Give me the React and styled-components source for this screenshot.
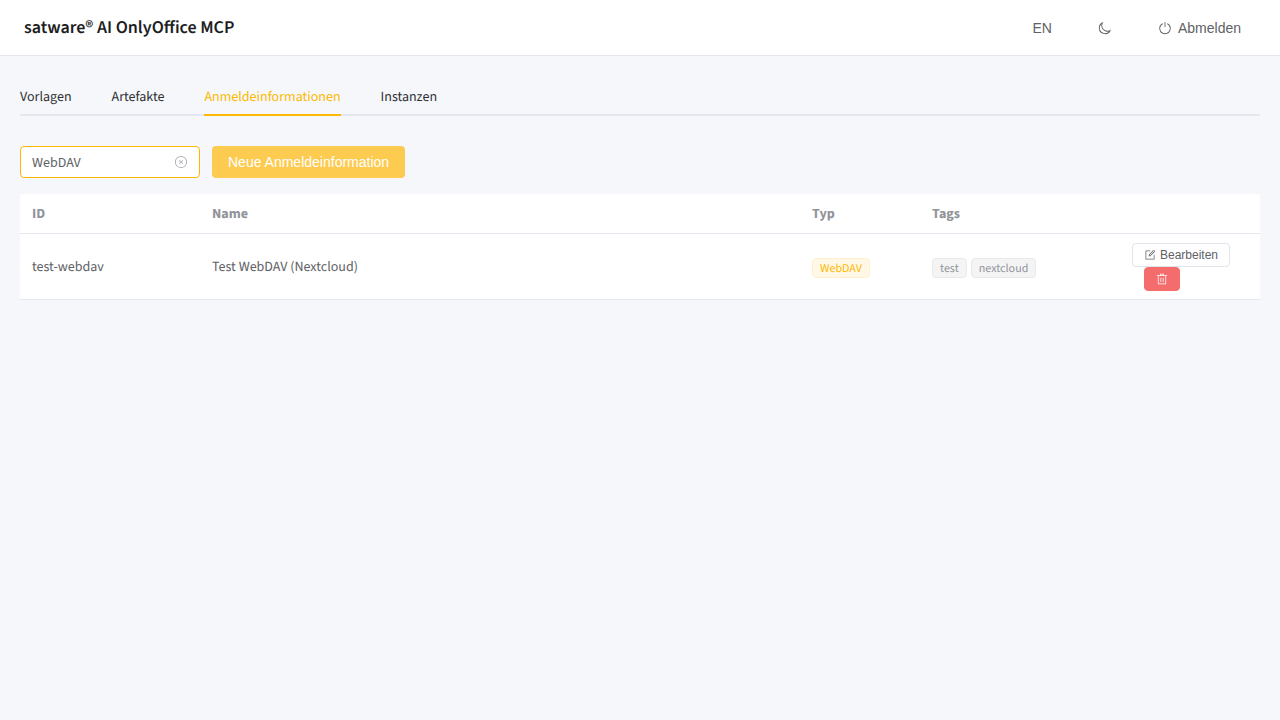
import React, { useState } from "react";
import styled, { createGlobalStyle, css } from "styled-components";

const GlobalStyle = createGlobalStyle`
  *, *::before, *::after { box-sizing: border-box; }
  body {
    margin: 0;
    background: #f5f7fb;
    color: #606266;
    font-family: "Source Sans 3", "Noto Sans CJK SC", "Noto Sans", sans-serif;
    font-size: 14px;
    text-rendering: geometricPrecision;
  }
`;

const uiFont = css`
  font-family: "Liberation Sans", Arial, sans-serif;
  text-rendering: auto;
`;

const Svg = styled.svg`
  display: block;
  flex: none;
  width: ${(p) => p.$size}px;
  height: ${(p) => p.$size}px;
  fill: currentColor;
`;

const icons = {
  moon: [
    "M240.448 240.448a384 384 0 1 0 559.424 525.696 448 448 0 0 1-542.016-542.08 391 391 0 0 0-17.408 16.384m181.056 362.048a384 384 0 0 0 525.632 16.384A448 448 0 1 1 405.056 76.8a384 384 0 0 0 16.448 525.696",
  ],
  power: [
    "M352 159.872V230.4a352 352 0 1 0 320 0v-70.528A416.128 416.128 0 0 1 512 960a416 416 0 0 1-160-800.128z",
    "M512 64q32 0 32 32v320q0 32-32 32t-32-32V96q0-32 32-32",
  ],
  clear: [
    "m466.752 512-90.496-90.496a32 32 0 0 1 45.248-45.248L512 466.752l90.496-90.496a32 32 0 0 1 45.248 45.248L557.248 512l90.496 90.496a32 32 0 1 1-45.248 45.248L512 557.248l-90.496 90.496a32 32 0 0 1-45.248-45.248z",
    "M512 896a384 384 0 1 0 0-768 384 384 0 0 0 0 768m0 64a448 448 0 1 1 0-896 448 448 0 0 1 0 896",
  ],
  edit: [
    "M832 512a32 32 0 1 1 64 0v352a32 32 0 0 1-32 32H160a32 32 0 0 1-32-32V160a32 32 0 0 1 32-32h352a32 32 0 0 1 0 64H192v640h640z",
    "m469.952 554.24 52.8-7.552L847.104 222.4a32 32 0 1 0-45.248-45.248L477.44 501.44l-7.552 52.8zm422.4-422.4a96 96 0 0 1 0 135.808l-331.84 331.84a32 32 0 0 1-18.112 9.088L436.8 623.68a32 32 0 0 1-36.224-36.224l15.104-105.6a32 32 0 0 1 9.024-18.112l331.904-331.84a96 96 0 0 1 135.744 0z",
  ],
  trash: [
    "M160 256H96a32 32 0 0 1 0-64h256V95.936a32 32 0 0 1 32-32h256a32 32 0 0 1 32 32V192h256a32 32 0 1 1 0 64h-64v672a32 32 0 0 1-32 32H192a32 32 0 0 1-32-32zm448-64v-64H416v64zM224 896h576V256H224zm192-128a32 32 0 0 1-32-32V416a32 32 0 0 1 64 0v320a32 32 0 0 1-32 32m192 0a32 32 0 0 1-32-32V416a32 32 0 0 1 64 0v320a32 32 0 0 1-32 32",
  ],
};

const Icon = ({ name, size = 14 }) => (
  <Svg viewBox="0 0 1024 1024" $size={size} aria-hidden="true">
    {icons[name].map((d) => (
      <path key={d} d={d} />
    ))}
  </Svg>
);

const Header = styled.header`
  display: flex;
  align-items: center;
  justify-content: space-between;
  height: 56px;
  padding: 0 24px;
  background: #fff;
  border-bottom: 1px solid #e4e7ed;
`;

const Title = styled.h1`
  margin: 0;
  padding-top: 2px;
  color: #1d1e1f;
  font-size: 18px;
  font-weight: 600;
  line-height: 24px;
`;

const HeaderActions = styled.div`
  display: flex;
  gap: 16px;
`;

const TextButton = styled.button`
  ${uiFont}
  display: inline-flex;
  align-items: center;
  gap: 6px;
  height: 32px;
  padding: 0 15px;
  border: 0;
  background: transparent;
  color: #606266;
  font-size: 14px;
  cursor: pointer;
`;

const Main = styled.main`
  padding: 20px;
`;

const Tabs = styled.nav`
  display: flex;
  gap: 40px;
  height: 40px;
  margin-bottom: 30px;
  box-shadow: inset 0 -2px 0 #e4e7ed;
`;

const Tab = styled.a`
  color: ${(p) => (p.$active ? "#fcb900" : "#303133")};
  line-height: 42px;
  text-decoration: none;
  box-shadow: ${(p) => (p.$active ? "inset 0 -2px 0 #fcb900" : "none")};
`;

const Toolbar = styled.div`
  display: flex;
  gap: 12px;
  margin-bottom: 16px;
`;

const Filter = styled.div`
  display: flex;
  align-items: center;
  width: 180px;
  height: 32px;
  padding: 0 11px;
  border: 1px solid #fcb900;
  border-radius: 4px;
  background: #fff;
`;

const FilterSelect = styled.select`
  flex: 1;
  min-width: 0;
  padding: 2px 0 0;
  border: 0;
  outline: 0;
  appearance: none;
  background: transparent;
  color: #606266;
  font: inherit;
  line-height: 24px;
`;

const ClearButton = styled.button`
  padding: 0;
  border: 0;
  background: transparent;
  color: #a8abb2;
  cursor: pointer;
`;

const PrimaryButton = styled.button`
  ${uiFont}
  height: 32px;
  padding: 0 16px;
  border: 0;
  border-radius: 4px;
  background: #fdcb50;
  color: #fff;
  font-size: 14px;
  cursor: pointer;
`;

const Table = styled.table`
  width: 100%;
  table-layout: fixed;
  border-spacing: 0;
  background: #fff;
`;

const Col = styled.col`
  width: ${(p) => (p.$width ? `${p.$width}px` : "auto")};
`;

const HeadCell = styled.th`
  height: 40px;
  padding: 2px 12px 0;
  border-bottom: 1px solid #e4e7ed;
  color: #909399;
  font-weight: 700;
  line-height: 23px;
  text-align: left;
`;

const Cell = styled.td`
  height: 66px;
  padding: ${(p) => (p.$text ? "10px 12px 8px" : "8px 12px")};
  border-bottom: 1px solid #e4e7ed;
  line-height: 23px;
`;

const TagList = styled.div`
  display: flex;
  gap: 4px;
  padding-top: 3px;
`;

const Tag = styled.span`
  height: 20px;
  padding: 0 7px;
  border: 1px solid ${(p) => (p.$info ? "#e9e9eb" : "#fff1cc")};
  border-radius: 4px;
  background: ${(p) => (p.$info ? "#f4f4f5" : "#fff8e6")};
  color: ${(p) => (p.$info ? "#909399" : "#fcb900")};
  font-size: 12px;
  line-height: 20px;
`;

const RowActions = styled.div`
  display: flex;
  flex-direction: column;
  align-items: flex-start;
`;

const SmallButton = styled.button`
  ${uiFont}
  display: inline-flex;
  align-items: center;
  gap: 4px;
  height: 24px;
  padding: 0 11px;
  border: 1px solid ${(p) => (p.$danger ? "#f56c6c" : "#e2e4ec")};
  border-radius: 4px;
  background: ${(p) => (p.$danger ? "#f56c6c" : "#fff")};
  color: ${(p) => (p.$danger ? "#fff" : "#606266")};
  margin-left: ${(p) => (p.$danger ? "12px" : "0")};
  font-size: 12px;
  white-space: nowrap;
  cursor: pointer;
`;

const tabs = ["Vorlagen", "Artefakte", "Anmeldeinformationen", "Instanzen"];
const rows = [
  {
    id: "test-webdav",
    name: "Test WebDAV (Nextcloud)",
    type: "WebDAV",
    tags: ["test", "nextcloud"],
  },
];

export default function App() {
  const [type, setType] = useState("WebDAV");
  const [active, setActive] = useState("Anmeldeinformationen");

  return (
    <>
      <GlobalStyle />
      <Header>
        <Title>satware® AI OnlyOffice MCP</Title>
        <HeaderActions>
          <TextButton type="button">EN</TextButton>
          <TextButton type="button" aria-label="Dunkles Design">
            <Icon name="moon" />
          </TextButton>
          <TextButton type="button">
            <Icon name="power" />
            Abmelden
          </TextButton>
        </HeaderActions>
      </Header>
      <Main>
        <Tabs>
          {tabs.map((tab) => (
            <Tab
              key={tab}
              href={`#${tab.toLowerCase()}`}
              $active={tab === active}
              aria-current={tab === active ? "page" : undefined}
              onClick={() => setActive(tab)}
            >
              {tab}
            </Tab>
          ))}
        </Tabs>
        <Toolbar>
          <Filter>
            <FilterSelect
              aria-label="Typ"
              value={type}
              onChange={(e) => setType(e.target.value)}
            >
              <option value="" />
              <option value="WebDAV">WebDAV</option>
            </FilterSelect>
            <ClearButton
              type="button"
              aria-label="Auswahl löschen"
              onClick={() => setType("")}
            >
              <Icon name="clear" />
            </ClearButton>
          </Filter>
          <PrimaryButton type="button">Neue Anmeldeinformation</PrimaryButton>
        </Toolbar>
        <Table>
          <colgroup>
            <Col $width={180} />
            <Col />
            <Col $width={120} />
            <Col $width={200} />
            <Col $width={140} />
          </colgroup>
          <thead>
            <tr>
              <HeadCell scope="col">ID</HeadCell>
              <HeadCell scope="col">Name</HeadCell>
              <HeadCell scope="col">Typ</HeadCell>
              <HeadCell scope="col">Tags</HeadCell>
              <HeadCell scope="col" aria-label="Aktionen" />
            </tr>
          </thead>
          <tbody>
            {rows.map((row) => (
              <tr key={row.id}>
                <Cell $text>{row.id}</Cell>
                <Cell $text>{row.name}</Cell>
                <Cell>
                  <TagList>
                    <Tag>{row.type}</Tag>
                  </TagList>
                </Cell>
                <Cell>
                  <TagList>
                    {row.tags.map((tag) => (
                      <Tag key={tag} $info>
                        {tag}
                      </Tag>
                    ))}
                  </TagList>
                </Cell>
                <Cell>
                  <RowActions>
                    <SmallButton type="button">
                      <Icon name="edit" size={12} />
                      Bearbeiten
                    </SmallButton>
                    <SmallButton type="button" $danger aria-label="Löschen">
                      <Icon name="trash" size={12} />
                    </SmallButton>
                  </RowActions>
                </Cell>
              </tr>
            ))}
          </tbody>
        </Table>
      </Main>
    </>
  );
}
